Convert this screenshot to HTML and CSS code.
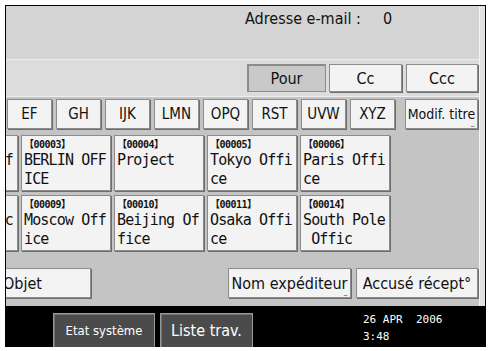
FILE: index.html
```html
<!DOCTYPE html>
<html lang="fr">

<head>
    <meta charset="UTF-8">
    <meta name="viewport" content="width=device-width, initial-scale=1.0">
    <title>Destinataires</title>
    <link rel="stylesheet" href="styles.css">
</head>

<body>
    <div class="screen">
        <header class="top">
            <span class="label">Adresse e-mail :</span>
            <span class="count">0</span>
        </header>

        <section class="recipients">
            <button class="btn pressed pour">Pour</button>
            <button class="btn cc">Cc</button>
            <button class="btn ccc">Ccc</button>
        </section>

        <nav class="alpha">
            <button class="btn key">EF</button>
            <button class="btn key">GH</button>
            <button class="btn key">IJK</button>
            <button class="btn key">LMN</button>
            <button class="btn key">OPQ</button>
            <button class="btn key">RST</button>
            <button class="btn key">UVW</button>
            <button class="btn key">XYZ</button>
            <button class="btn key modif has-more">Modif. titre</button>
        </nav>

        <section class="dest">
            <div class="dest-row">
                <div class="card first"><span class="code">【00002】</span><span class="name">London Off<br>ice</span></div>
                <div class="card"><span class="code">【00003】</span><span class="name">BERLIN OFF<br>ICE</span></div>
                <div class="card"><span class="code">【00004】</span><span class="name">Project</span></div>
                <div class="card"><span class="code">【00005】</span><span class="name">Tokyo Offi<br>ce</span></div>
                <div class="card"><span class="code">【00006】</span><span class="name">Paris Offi<br>ce</span></div>
            </div>
            <div class="dest-row">
                <div class="card first"><span class="code">【00008】</span><span class="name">Rome Offic<br>e</span></div>
                <div class="card"><span class="code">【00009】</span><span class="name">Moscow Off<br>ice</span></div>
                <div class="card"><span class="code">【00010】</span><span class="name">Beijing Of<br>fice</span></div>
                <div class="card"><span class="code">【00011】</span><span class="name">Osaka Offi<br>ce</span></div>
                <div class="card"><span class="code">【00014】</span><span class="name">South Pole<br>&nbsp;Offic</span></div>
            </div>
        </section>

        <section class="options">
            <button class="btn opt objet">Objet</button>
            <button class="btn opt nom has-more">Nom expéditeur</button>
            <button class="btn opt accuse">Accusé récept°</button>
        </section>

        <footer class="status">
            <button class="dark etat">Etat système</button>
            <button class="dark liste">Liste trav.</button>
            <div class="clock">
                <span>26 APR&nbsp; 2006</span>
                <span>3:48</span>
            </div>
        </footer>
    </div>
</body>

</html>
```

FILE: styles.css
```css
/* Page and panel frame */
body {
    margin: 0;
    background-color: #fff;
    font-family: 'Liberation Sans Narrow', 'DejaVu Sans Condensed', 'Liberation Sans', sans-serif;
    color: #111;
}

.screen {
    margin: 5px 0 0 5px;
    width: 479px;
    height: 341px;
    border: 1px solid #000;
    border-bottom: none;
    background-color: #c4c4c4;
    display: flex;
    flex-direction: column;
    overflow: hidden;
    position: relative;
}

/* light strip down the right edge */
.screen::after {
    content: '';
    position: absolute;
    top: 0;
    right: 0;
    width: 5px;
    height: 300px;
    background-color: #e2e2e2;
    border-left: 1px solid #f4f4f4;
}

/* Top info bar */
.top {
    height: 54px;
    background-color: #d4d4d4;
    border-bottom: 1px solid #ececec;
    padding-left: 239px;
    display: flex;
    align-items: flex-start;
    padding-top: 3px;
    box-sizing: border-box;
    font-size: 16px;
}

.top .count {
    margin-left: 22px;
}

/* Generic buttons */
.btn {
    font-family: inherit;
    font-size: 15px;
    color: #111;
    background-color: #f3f3f3;
    border: 1px solid #8c8c8c;
    box-shadow: 1px 1px 0 #6e6e6e;
    padding: 0;
    margin: 0;
    position: relative;
}

.btn.pressed {
    background-color: #c9c9c9;
    box-shadow: inset 1px 1px 0 #8a8a8a;
}

/* small dots marking a button with more options */
.has-more::after {
    content: '...';
    position: absolute;
    right: 3px;
    bottom: 1px;
    font-size: 8px;
    line-height: 4px;
    letter-spacing: -1px;
    color: #555;
}

/* Pour / Cc / Ccc */
.recipients {
    height: 36px;
    background-color: #dcdcdc;
    border-bottom: 1px solid #efefef;
    display: flex;
    justify-content: flex-end;
    align-items: center;
    padding-right: 7px;
    gap: 3px;
}

.recipients .btn {
    height: 28px;
    font-size: 16px;
}

.pour {
    width: 79px;
}

.cc {
    width: 73px;
}

.ccc {
    width: 72px;
    margin-left: 1px;
}

/* Alphabet keys */
.alpha {
    display: flex;
    gap: 4px;
    margin-top: 2px;
    padding-left: 1px;
    height: 30px;
}

.key {
    width: 45px;
    height: 30px;
}

.key.modif {
    width: 73px;
    margin-left: 6px;
    font-size: 14px;
}

/* Destination cards */
.dest {
    margin-top: 6px;
    display: flex;
    flex-direction: column;
    gap: 4px;
}

.dest-row {
    display: flex;
    gap: 3px;
}

.card {
    width: 90px;
    height: 56px;
    box-sizing: border-box;
    flex-shrink: 0;
    background-color: #f3f3f3;
    border: 1px solid #8c8c8c;
    box-shadow: 1px 1px 0 #6e6e6e;
    padding: 0 2px;
    display: flex;
    flex-direction: column;
    font-family: 'DejaVu Sans Mono', 'Liberation Mono', monospace;
}

.card.first {
    margin-left: -78px;
}

.code {
    height: 15px;
    line-height: 17px;
    font-size: 10px;
    font-weight: bold;
    letter-spacing: -0.5px;
    font-family: 'DejaVu Sans Mono', 'Noto Sans CJK JP', monospace;
}

.name {
    font-size: 15px;
    line-height: 19px;
    letter-spacing: -0.85px;
    white-space: nowrap;
}

/* Objet / expediteur / accuse */
.options {
    display: flex;
    margin-top: 17px;
    height: 30px;
    gap: 5px;
    padding-right: 7px;
}

.opt {
    height: 30px;
    font-size: 16px;
}

.objet {
    width: 93px;
    margin-left: -8px;
    text-align: left;
    padding-left: 4px;
}

.nom {
    width: 123px;
    margin-left: auto;
}

.accuse {
    width: 122px;
}

/* Bottom status bar */
.status {
    margin-top: 8px;
    flex: 1;
    background-color: #000;
    display: flex;
    align-items: flex-end;
    padding-left: 47px;
    gap: 5px;
    position: relative;
    z-index: 1;
}

.dark {
    font-family: inherit;
    color: #fff;
    background-color: #4b4b4b;
    border: 1px solid #9a9a9a;
    border-bottom: none;
    box-shadow: inset 1px 1px 0 #707070;
    height: 34px;
    padding: 0;
}

.etat {
    width: 102px;
    font-size: 13px;
}

.liste {
    width: 93px;
    font-size: 16px;
}

.clock {
    margin-left: 105px;
    align-self: flex-start;
    padding-top: 5px;
    display: flex;
    flex-direction: column;
    color: #fff;
    font-family: 'DejaVu Sans Mono', monospace;
    font-size: 11px;
    line-height: 17px;
}
```
